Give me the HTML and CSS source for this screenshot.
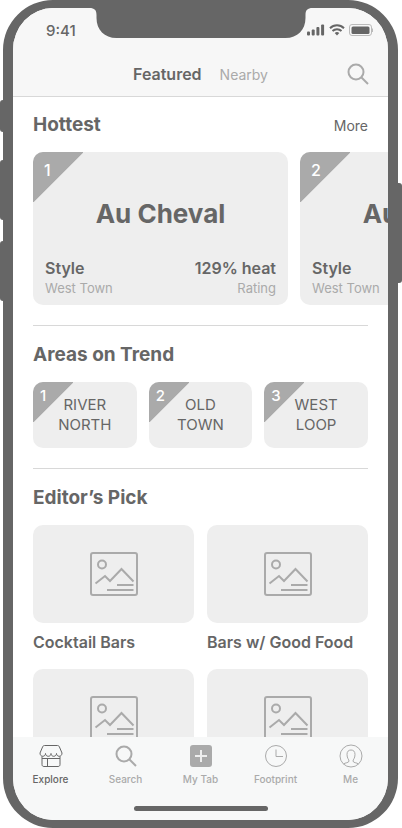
FILE: index.html
```html
<!DOCTYPE html>
<html lang="en">
<head>
<meta charset="utf-8">
<meta name="viewport" content="width=device-width, initial-scale=1">
<title>Explore</title>
<link rel="stylesheet" href="styles.css">
</head>
<body>
<svg class="sprite" aria-hidden="true">
  <symbol id="picture" viewBox="0 0 48 44">
    <rect x="1" y="1" width="46" height="42" rx="2"/>
    <circle cx="12" cy="12.500" r="4"/>
    <path d="M5.500 31.500L15 24l5 5L31.500 17l12 12.500M27 33h16.500M17 38h26.500"/>
  </symbol>
  <symbol id="search" viewBox="0 0 24 24">
    <circle cx="10" cy="10" r="7.500"/>
    <path d="M15.500 15.500l6.500 6.500"/>
  </symbol>
</svg>

<div class="phone">
  <span class="key key-mute"></span>
  <span class="key key-up"></span>
  <span class="key key-down"></span>
  <span class="key key-power"></span>

  <div class="screen">
    <svg class="notch" viewBox="0 0 223 30" aria-hidden="true"><path d="M0 0h223c-5 0-7 2-7 7v3c0 12-8 20-20 20H27C15 30 7 22 7 10V7c0-5-2-7-7-7z"/></svg>

    <header class="top">
      <div class="status">
        <span>9:41</span>
        <svg class="signals" viewBox="0 0 66 12" aria-hidden="true">
          <g class="solid">
            <rect x="0" y="7.500" width="3" height="4" rx="1"/>
            <rect x="4.700" y="5.500" width="3" height="6" rx="1"/>
            <rect x="9.400" y="3" width="3" height="8.500" rx="1"/>
            <rect x="14.100" y="0.500" width="3" height="11" rx="1"/>
            <path d="M30 11.500l2.300-2.400a3.400 3.400 0 0 0-4.600 0z"/>
            <rect x="44.500" y="2.500" width="18" height="7.500" rx="1.500"/>
          </g>
          <path class="waves" d="M23 4.200a10 10 0 0 1 14 0M25.500 7a6.500 6.500 0 0 1 9 0"/>
          <rect class="shell" x="42.500" y="0.500" width="22" height="11" rx="2.500"/>
          <path class="cap" d="M65.500 4.500v3.500"/>
        </svg>
      </div>
      <div class="switcher">
        <button class="switch active" type="button">Featured</button>
        <button class="switch" type="button">Nearby</button>
        <button class="find" type="button" aria-label="Search"><svg class="find-icon"><use href="#search"/></svg></button>
      </div>
    </header>

    <main class="feed">
      <section class="section">
        <div class="heading"><h2>Hottest</h2><a class="more" href="#more">More</a></div>
        <div class="carousel">
          <article class="venue">
            <span class="rank">1</span>
            <h3>Au Cheval</h3>
            <div class="facts">
              <p><strong>Style</strong><small>West Town</small></p>
              <p class="rating"><strong>129% heat</strong><small>Rating</small></p>
            </div>
          </article>
          <article class="venue">
            <span class="rank">2</span>
            <h3>Au Cheval</h3>
            <div class="facts">
              <p><strong>Style</strong><small>West Town</small></p>
              <p class="rating"><strong>129% heat</strong><small>Rating</small></p>
            </div>
          </article>
        </div>
      </section>

      <section class="section">
        <div class="heading"><h2>Areas on Trend</h2></div>
        <div class="areas">
          <a class="area" href="#river-north"><span class="rank">1</span>RIVER<br>NORTH</a>
          <a class="area" href="#old-town"><span class="rank">2</span>OLD<br>TOWN</a>
          <a class="area" href="#west-loop"><span class="rank">3</span>WEST<br>LOOP</a>
        </div>
      </section>

      <section class="section">
        <div class="heading"><h2>Editor’s Pick</h2></div>
        <div class="picks">
          <a class="pick" href="#cocktail"><span class="thumb"><svg class="picture"><use href="#picture"/></svg></span>Cocktail Bars</a>
          <a class="pick" href="#food"><span class="thumb"><svg class="picture"><use href="#picture"/></svg></span>Bars w/ Good Food</a>
          <a class="pick" href="#pick-3" aria-hidden="true"><span class="thumb"><svg class="picture"><use href="#picture"/></svg></span></a>
          <a class="pick" href="#pick-4" aria-hidden="true"><span class="thumb"><svg class="picture"><use href="#picture"/></svg></span></a>
        </div>
      </section>
    </main>

    <footer class="bottom">
      <nav class="tabs">
        <a class="tab current" href="#explore">
          <svg class="tab-icon" viewBox="0 0 24 24"><path d="M5.500 1.500h13c1 0 1.500.5 1.800 1.200l2.700 6.300c0 2-1.200 3.300-2.800 3.300s-2.700-1.300-2.700-2.800c0 1.500-1.200 2.800-2.800 2.800S12 11 12 9.500c0 1.500-1.100 2.800-2.700 2.800s-2.800-1.300-2.800-2.800c0 1.500-1.100 2.800-2.700 2.800S1 11 1 9l2.700-6.300c.3-.7.800-1.200 1.800-1.200zM3 12.500v8c0 1.300.7 2 2 2h14c1.300 0 2-.7 2-2v-8M3 14.500h18M8.500 14.500v8"/></svg>
          Explore
        </a>
        <a class="tab" href="#search-tab">
          <svg class="tab-icon bold"><use href="#search"/></svg>
          Search
        </a>
        <a class="tab" href="#my-tab">
          <svg class="tab-icon" viewBox="0 0 24 24"><rect class="plate" x="1" y="1" width="22" height="22" rx="3"/><path class="plus" d="M12 6v12M6 12h12"/></svg>
          My Tab
        </a>
        <a class="tab" href="#footprint">
          <svg class="tab-icon" viewBox="0 0 24 24"><circle cx="12" cy="12" r="10.500"/><path d="M12 5.500v7h7"/></svg>
          Footprint
        </a>
        <a class="tab" href="#me">
          <svg class="tab-icon" viewBox="0 0 24 24"><circle cx="12" cy="12" r="11"/><path d="M4.500 20c1.500-1.500 5.500-1 5.500-3 0-1.500-2-2.500-2-6.500 0-3 1.500-4.500 4-4.500s4 1.500 4 4.500c0 4-2 5-2 6.500 0 2 4 1.500 5.500 3"/></svg>
          Me
        </a>
      </nav>
      <span class="indicator"></span>
    </footer>
  </div>
</div>
</body>
</html>
```

FILE: styles.css
```css
:root {
  --ink: #666;
  --muted: #aaa;
  --card: #eee;
  --bar: #f7f7f7;
  --line: #d8d8d8;
}

* {
  box-sizing: border-box;
}

body {
  margin: 0;
  background: #fff;
  color: var(--ink);
  font-family: Inter, "Liberation Sans", sans-serif;
  font-size: 16px;
}

h2, h3, p {
  margin: 0;
}

a {
  color: inherit;
  text-decoration: none;
}

button {
  padding: 0;
  border: 0;
  background: none;
  color: inherit;
  font: inherit;
}

svg {
  display: block;
  fill: none;
  stroke: currentColor;
}

.sprite {
  position: absolute;
  width: 0;
  height: 0;
}

/* Device frame */
.phone {
  position: relative;
  height: 100vh;
  padding: 0 4px 0 3px;
}

.screen {
  position: relative;
  display: flex;
  flex-direction: column;
  height: 100%;
  border: solid var(--ink);
  border-width: 8px 10px;
  border-radius: 50px;
  background: #fff;
  overflow: hidden;
}

.key {
  position: absolute;
  left: 0;
  width: 6px;
  height: 60px;
  border-radius: 3px 0 0 3px;
  background: var(--ink);
}

.key-mute {
  top: 100px;
  height: 32px;
}

.key-up {
  top: 160px;
}

.key-down {
  top: 241px;
}

.key-power {
  top: 183px;
  right: 0;
  left: auto;
  height: 100px;
  border-radius: 0 3px 3px 0;
}

.notch {
  position: absolute;
  z-index: 2;
  top: 0;
  left: 50%;
  width: 223px;
  height: 30px;
  transform: translateX(-50%);
  fill: var(--ink);
  stroke: none;
}

/* Header */
.top {
  z-index: 1;
  flex: none;
  background: var(--bar);
  box-shadow: 0 1px var(--line);
}

.status {
  display: flex;
  align-items: center;
  justify-content: space-between;
  height: 44px;
  padding: 0 15px 0 33px;
  font-size: 15px;
  font-weight: 500;
}

.signals {
  width: 66px;
  height: 12px;
}

.solid {
  fill: var(--ink);
  stroke: none;
}

.waves {
  stroke-width: 2;
}

.shell,
.cap {
  stroke: #bbb;
}

.switcher {
  position: relative;
  display: flex;
  align-items: baseline;
  justify-content: center;
  gap: 18px;
  height: 44px;
  line-height: 44px;
}

.switch {
  color: var(--muted);
  font-size: 14px;
}

.switch.active {
  color: var(--ink);
  font-size: 16px;
  font-weight: 600;
}

.find {
  position: absolute;
  top: 10px;
  right: 18px;
  color: var(--muted);
}

.find-icon {
  width: 24px;
  height: 24px;
  stroke-width: 2;
}

/* Feed */
.feed {
  flex: 1;
  min-height: 0;
  padding: 0 20px;
  overflow: hidden auto;
  scrollbar-width: none;
}

.section {
  padding: 16px 0 20px;
}

.section + .section {
  border-top: 1px solid var(--line);
}

.heading {
  display: flex;
  align-items: baseline;
  justify-content: space-between;
  height: 24px;
  margin-bottom: 16px;
  line-height: 26px;
}

h2 {
  font-size: 19px;
  font-weight: 700;
}

.more {
  font-size: 14px;
}

.carousel {
  display: flex;
  gap: 12px;
  margin-right: -20px;
  overflow: auto hidden;
  scrollbar-width: none;
}

.venue,
.area {
  position: relative;
  border-radius: 10px;
  background: var(--card);
  overflow: hidden;
}

.venue {
  display: flex;
  flex: 0 0 255px;
  flex-direction: column;
  padding: 45px 12px 8px;
}

.venue h3 {
  margin-bottom: 27px;
  font-size: 26px;
  font-weight: 700;
  line-height: 34px;
  text-align: center;
}

.rank {
  position: absolute;
  top: 0;
  left: 0;
  width: 50px;
  height: 50px;
  padding-left: 11px;
  background: linear-gradient(135deg, var(--muted) 50%, transparent calc(50% + 1px));
  color: #fff;
  font-size: 16px;
  font-weight: 500;
  line-height: 36px;
}

.area .rank {
  width: 40px;
  height: 40px;
  padding-left: 7px;
  font-size: 15px;
  line-height: 28px;
  text-align: left;
}

.facts {
  display: flex;
  justify-content: space-between;
}

.facts strong,
.facts small {
  display: block;
}

.facts strong {
  font-size: 16px;
  font-weight: 600;
  line-height: 21px;
}

.facts small {
  color: var(--muted);
  font-size: 13px;
  line-height: 18px;
}

.rating {
  text-align: right;
}

.areas {
  display: grid;
  grid-template-columns: repeat(3, 1fr);
  gap: 12px;
}

.area {
  padding: 13px 0;
  font-size: 15px;
  line-height: 20px;
  text-align: center;
}

.picks {
  display: grid;
  grid-template-columns: 1fr 1fr;
  gap: 8px 13px;
}

.pick {
  font-size: 16px;
  font-weight: 600;
  line-height: 38px;
  white-space: nowrap;
}

.thumb {
  display: flex;
  align-items: center;
  justify-content: center;
  height: 98px;
  border-radius: 10px;
  background: var(--card);
}

.picture {
  width: 48px;
  height: 44px;
  color: var(--muted);
  stroke-width: 2;
}

/* Tab bar */
.bottom {
  flex: none;
  padding: 7px 0 9px;
  background: #f7f8f8;
}

.tabs {
  display: grid;
  grid-template-columns: repeat(5, 1fr);
  margin-bottom: 20px;
}

.tab {
  display: flex;
  flex-direction: column;
  align-items: center;
  gap: 4px;
  color: var(--muted);
  font-size: 10px;
  font-weight: 500;
  line-height: 14px;
}

.tab.current {
  color: var(--ink);
}

.tab-icon {
  width: 24px;
  height: 24px;
}

.tab-icon.bold {
  stroke-width: 2;
}

.plate {
  fill: var(--muted);
  stroke: none;
}

.plus {
  stroke: #eee;
  stroke-width: 2;
}

.indicator {
  display: block;
  width: 134px;
  height: 5px;
  margin: 0 auto;
  border-radius: 3px;
  background: var(--ink);
}
```
